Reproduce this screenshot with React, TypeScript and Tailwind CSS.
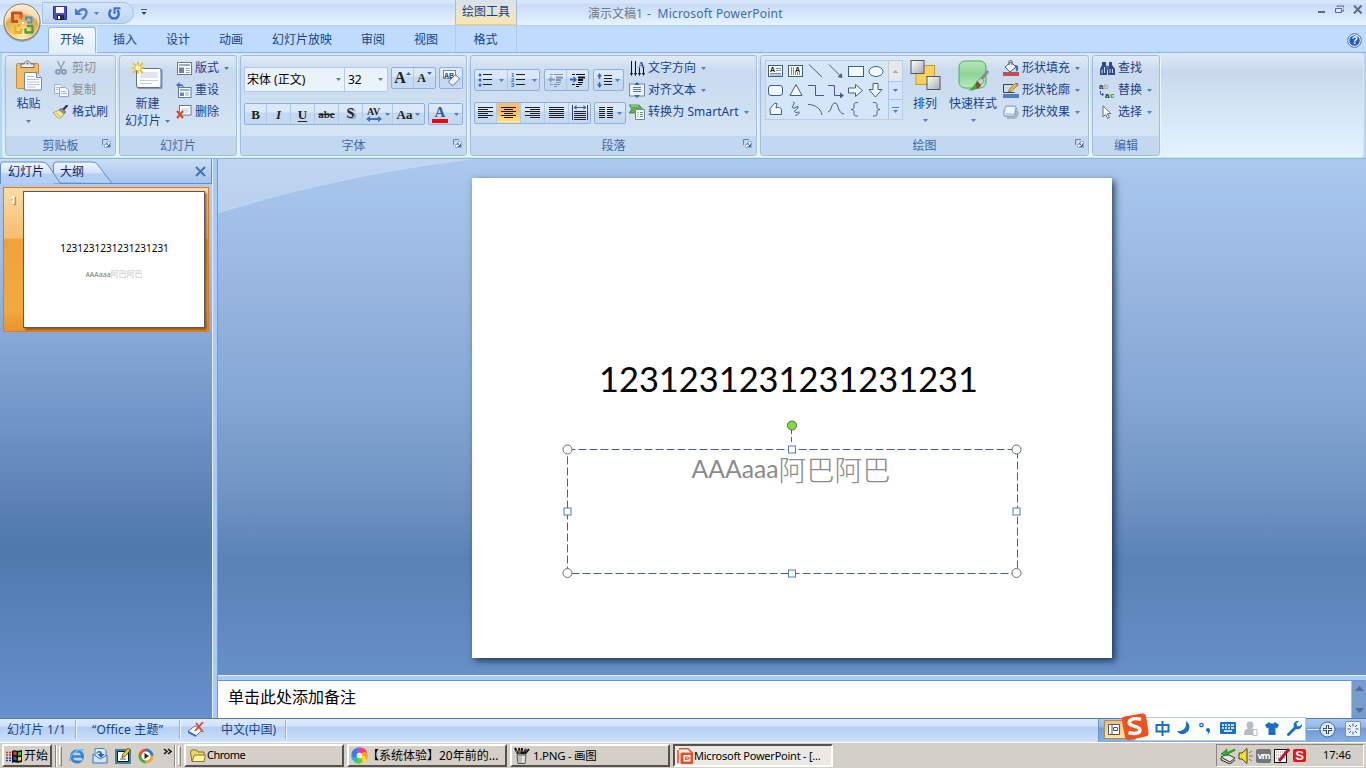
import React from "react";

type Kids = { children?: React.ReactNode };

const Svg = ({ w = 16, h = 16, children, cls = "" }: Kids & { w?: number; h?: number; cls?: string }) => (
  <svg width={w} height={h} viewBox={`0 0 ${w} ${h}`} className={`block shrink-0 ${cls}`} fill="none">
    {children}
  </svg>
);

const Caret = ({ cls = "" }: { cls?: string }) => (
  <Svg w={5} h={3} cls={cls}>
    <path d="M0 0h5L2.500 3z" fill="#4f7fb8" />
  </Svg>
);

const Launcher = () => (
  <Svg w={9} h={9}>
    <path d="M.5 6V.5H6" stroke="#5c86b8" />
    <path d="M2.500 8.500h6v-6h-3v3h-3z" fill="#fff" stroke="#8fb0d8" />
    <path d="M4 4l3.500 3.500M7.500 4.500v3h-3" stroke="#3f6ca8" />
  </Svg>
);

/* ---------- ribbon scaffolding ---------- */

const Group = ({ w, label, launcher, children }: Kids & { w: string; label: string; launcher?: boolean }) => (
  <section className={`${w} flex h-[101px] shrink-0 flex-col overflow-hidden rounded-[3px] border border-[#a3bedd] bg-gradient-to-b from-[#dfeaf6] from-0% via-[#c9daef] via-[16%] to-[#d9e8f7] to-100% shadow-[1px_1px_0_#eef6ff]`}>
    <div className="flex h-[80px]">{children}</div>
    <div className="flex h-[19px] items-center bg-[#c1d8f0] text-[12px] text-[#3e6aaa]">
      <span className="flex-1 text-center leading-[19px]">{label}</span>
      {launcher && <span className="mt-[-5px] mr-[4px] -ml-[13px]"><Launcher /></span>}
    </div>
  </section>
);

const Row = ({ icon, text, caret, off, tw = "" }: { icon: React.ReactNode; text: string; caret?: boolean; off?: boolean; tw?: string }) => (
  <div className={`flex h-[22px] items-center whitespace-nowrap ${off ? "text-[#8d8d8d]" : "text-[#15428b]"}`}>
    <span className="mr-[3px] flex w-[16px] justify-center">{icon}</span>
    <span className={`leading-[22px] ${tw}`}>{text}</span>
    {caret && <Caret cls="ml-[5px]" />}
  </div>
);

const Strip = ({ children, cls = "" }: Kids & { cls?: string }) => (
  <div className={`flex h-[22px] rounded-[2px] border border-[#8fb0dc] bg-gradient-to-b from-[#dbe8f8] from-40% to-[#c5d9f1] to-45% ${cls}`}>{children}</div>
);

const Cell = ({ w, children, on, last }: Kids & { w: string; on?: boolean; last?: boolean }) => (
  <div className={`${w} flex shrink-0 items-center justify-center gap-[3px] ${last ? "" : "border-r border-[#b0c9e8]"} ${on ? "bg-gradient-to-b from-[#fcc07c] from-0% via-[#fdb760] via-40% to-[#ffe78f]" : ""}`}>
    {children}
  </div>
);

/* ---------- icons ---------- */

const Orb = () => (
  <Svg w={42} h={42}>
    <defs>
      <radialGradient id="orb" cx=".5" cy=".85" r=".95">
        <stop offset="0" stopColor="#fff3b8" />
        <stop offset=".35" stopColor="#ecc268" />
        <stop offset=".56" stopColor="#dba650" />
        <stop offset=".64" stopColor="#f3dcae" />
        <stop offset="1" stopColor="#fbf3e4" />
      </radialGradient>
    </defs>
    <circle cx="21" cy="22.500" r="18.500" fill="#6f7f98" opacity=".55" />
    <circle cx="21" cy="21" r="18" fill="url(#orb)" stroke="#8f7752" strokeWidth="1" />
    <circle cx="21" cy="21" r="16.800" stroke="#fff" strokeOpacity=".5" />
    <path d="M17 20.500h-5.500V12h8.500v5" stroke="#cf4a1c" strokeWidth="3" strokeLinejoin="round" />
    <path d="M20 14v4.500" stroke="#ea6c2c" strokeWidth="2.500" />
    <path d="M24.500 16.500h6v5h-4.500M25 15.500v4" stroke="#4a93d8" strokeWidth="2" />
    <path d="M14 24v7.500h6v-4M16 24.500h3.500" stroke="#f6ae22" strokeWidth="2.800" strokeLinejoin="round" />
    <path d="M26 25h5.500v6.500h-7v-4" stroke="#4aa044" strokeWidth="2.400" strokeLinejoin="round" />
    <path d="M21 21h2v2h-2z" fill="#fff" />
  </Svg>
);

const Save = () => (
  <Svg w={14} h={14}>
    <path d="M.5.5h13v13H2L.5 12z" fill="#4950b8" stroke="#2c3180" />
    <path d="M3 1h8v6H3z" fill="#f2f6fd" />
    <path d="M4 9h7v5H4z" fill="#20254f" />
    <path d="M5 10h2v3H5z" fill="#fff" />
  </Svg>
);

const Undo = () => (
  <Svg w={13} h={13}>
    <path d="M0 1v7h7L4.500 5.500z" fill="#4a78d0" />
    <path d="M3 5.500C6 1 11.500 1.500 11.500 5.500c0 3-2 4.500-4.500 6.500" stroke="#5580d2" strokeWidth="2.400" />
  </Svg>
);

const Redo = () => (
  <Svg w={13} h={13}>
    <path d="M3 2.500C-.5 7 2 11.500 6.200 11.500S12 7 9.500 3" stroke="#3e6fcf" strokeWidth="2.400" />
    <path d="M6.500 7V1.200H12.500" stroke="#3e6fcf" strokeWidth="2" />
  </Svg>
);

const Paste = () => (
  <Svg w={28} h={31}>
    <rect x="1.500" y="3.500" width="22" height="25" rx="1.500" fill="#f3bd60" stroke="#c58d3c" />
    <path d="M6 7.500V4h3.500c0-4 6-4 6 0H19v3.500z" fill="#e9edf2" stroke="#6b6f78" />
    <circle cx="12.500" cy="3.500" r="1" fill="#555" />
    <path d="M9.500 12.500h12l5 5v12.500h-17z" fill="#fbfdff" stroke="#6d86ae" />
    <path d="M21.500 12.500v5h5" fill="#dbe6f6" stroke="#6d86ae" />
    <path d="M12 16.500h7M12 19.500h12M12 22h12M12 24.500h12M12 27h9" stroke="#b6c5dc" />
  </Svg>
);

const Cut = () => (
  <Svg w={12} h={14}>
    <path d="M2.500 0l4.500 9M9.500 0L5 9" stroke="#9aa7b8" strokeWidth="1.600" />
    <circle cx="3" cy="10.800" r="2" stroke="#8796ab" strokeWidth="1.700" />
    <circle cx="9" cy="10.800" r="2" stroke="#8796ab" strokeWidth="1.700" />
  </Svg>
);

const Copy = () => (
  <Svg w={15} h={13}>
    <path d="M.5.5h6l2 2v7h-8z" fill="#eef3f9" stroke="#a3b1c4" />
    <path d="M5.500 3.500h6l3 3v6h-9z" fill="#f4f7fb" stroke="#98a8bd" />
    <path d="M2 3.500h3M2 5.500h2M7 7.500h5M7 9.500h6" stroke="#b0bccb" />
  </Svg>
);

const Painter = () => (
  <Svg w={16} h={14}>
    <path d="M14.500 0L10 5" stroke="#3a3558" strokeWidth="2.400" />
    <path d="M8 3l5 4-2 2-5-4z" fill="#8f8aa8" stroke="#5a5870" strokeWidth=".6" />
    <path d="M6 5l5 4-4.500 5L0 8z" fill="#f6e88c" stroke="#a8923c" strokeWidth=".8" />
    <path d="M3 8l5 4" stroke="#c9b050" strokeWidth=".7" />
  </Svg>
);

const NewSlide = () => (
  <Svg w={31} h={28}>
    <rect x="5.500" y="7" width="25" height="20" rx="1.500" fill="#8995a8" />
    <rect x="4.500" y="6.500" width="24.500" height="19" rx="1.500" fill="#fbfcfe" stroke="#59729b" />
    <path d="M8 10h18v6H8z" fill="#dfe6f1" />
    <path d="M8 18.500h18M8 21.500h12" stroke="#c5cfde" />
    <path d="M6 0v12M0 6h12M1 1l10 10M11 1L1 11" stroke="#f2b90c" strokeWidth="1.600" />
    <circle cx="6" cy="6" r="2.500" fill="#fff8ae" />
  </Svg>
);

const LayoutIcon = () => (
  <Svg w={15} h={13}>
    <rect x=".5" y=".5" width="14" height="12" fill="#fff" stroke="#5f7ba5" />
    <path d="M2 2h11v2H2z" fill="#99aed0" />
    <path d="M2 5.500h5V11H2z" fill="#6b84ad" />
    <path d="M8.500 6.500H13M8.500 8.500H13M8.500 10.500H13" stroke="#95a8c6" />
  </Svg>
);

const ResetIcon = () => (
  <Svg w={16} h={16}>
    <rect x="2.500" y="5.500" width="12.500" height="10" fill="#fff" stroke="#5f7ba5" />
    <path d="M4 7h9.500v2H4z" fill="#9db0d0" />
    <path d="M4 10.500h4V14H4z" fill="#6b84ad" />
    <path d="M9 11h4M9 13h4" stroke="#95a8c6" />
    <path d="M3.500 0L0 3l3.500 3V4C6 4 7 4.500 7.500 6 8 3 6 2 3.500 2z" fill="#3b72c8" />
  </Svg>
);

const DeleteIcon = () => (
  <Svg w={16} h={14}>
    <rect x="3.500" y=".5" width="11.500" height="9.500" fill="#fff" stroke="#5f7ba5" />
    <path d="M5 3h8v5H6z" fill="#d9e3f2" />
    <path d="M1 6l6 7M7 6l-6 7" stroke="#df402a" strokeWidth="2" />
  </Svg>
);

const Eraser = () => (
  <Svg w={17} h={16}>
    <rect x=".5" y=".5" width="12" height="8" fill="#f5f8fd" stroke="#7087ae" />
    <text x="1" y="7.500" fontSize="7" fontWeight="bold" fontFamily="Liberation Sans" fill="#28426e">AB</text>
    <path d="M6 11l5-5c1-1 2-1 3 0l1.500 1.500c1 1 .8 2 0 2.700L11 14.500c-1 1-2 1-3 0L6.500 13c-.8-.6-.9-1.400-.5-2z" fill="#e9eef7" stroke="#5b6f95" />
  </Svg>
);

const Lines = ({ rows }: { rows: [number, number][] }) => (
  <Svg w={15} h={12}>
    {rows.map(([a, b], i) => (
      <path key={i} d={`M${a} ${i * 2 + 0.5}H${b}`} stroke="#1d1d1d" />
    ))}
  </Svg>
);

const Bullets = ({ num }: { num?: boolean }) => (
  <Svg w={15} h={14}>
    {[2, 7, 12].map((y, i) => (
      <g key={y}>
        {num ? (
          <text x="0" y={y + 2} fontSize="6" fontWeight="bold" fontFamily="Liberation Sans" fill="#3664b4">{i + 1}</text>
        ) : (
          <circle cx="2" cy={y} r="1.500" fill="#3664b4" />
        )}
        <path d={`M5 ${y - 0.5}h9`} stroke="#222" />
      </g>
    ))}
  </Svg>
);

const Indent = ({ off }: { off?: boolean }) => (
  <Svg w={16} h={14}>
    <g stroke={off ? "#8592ab" : "#111"}>
      <path d="M2 1.500h3M6 1.500h9M2 11.500h3M6 11.500h6M6 13.500h3" />
      <path d="M8 4.500h7M8 7h5" strokeWidth="2" />
      <path d="M8 9.500h5" />
    </g>
    {off ? <path d="M0 6.500L3.500 3v2.500H7v2H3.500V10z" fill="#8c9ab3" /> : <path d="M7 6.500L3.500 3v2.500H0v2h3.500V10z" fill="#3565bd" />}
  </Svg>
);

const Spacing = () => (
  <Svg w={15} h={15}>
    <path d="M2.500 0L5 3.500H3.300V6H1.700V3.500H0zM2.500 15L5 11.500H3.300V9H1.700v2.500H0z" fill="#3565bd" />
    <path d="M7 2.500h8M7 5.500h8M7 8.500h8M7 11.500h8" stroke="#222" />
  </Svg>
);

const Distribute = () => (
  <Svg w={16} h={16}>
    <path d="M.5 0v15M15.500 0v15" stroke="#33456a" />
    <path d="M1.500 2.500L4.500 0v2h7V0l3 2.500-3 2.500V3h-7v2z" fill="#3565bd" />
    <path d="M2 6.500h12M2 8.500h12M2 10.500h12M2 12.500h12M2 14.500h12" stroke="#222" />
  </Svg>
);

const Columns = () => (
  <Svg w={14} h={12}>
    {[0, 2, 4, 6, 8, 10].map((y) => (
      <path key={y} d={`M0 ${y + 0.5}h6M8 ${y + 0.5}h6`} stroke="#1d1d1d" />
    ))}
  </Svg>
);

const TextDir = () => (
  <Svg w={15} h={15}>
    <path d="M1.500 0v13M5.500 0v13M9.500 7v6M13.500 7v6" stroke="#111" />
    <path d="M0 12h3l-1.500 3zM4 12h3l-1.500 3zM8 12h3l-1.500 3zM12 12h3l-1.500 3z" fill="#111" />
    <text x="8" y="7" fontSize="9" fontWeight="bold" fontFamily="Liberation Serif" fill="#26427c">A</text>
  </Svg>
);

const AlignText = () => (
  <Svg w={16} h={16}>
    <rect x=".5" y="2" width="15" height="12" fill="#edf3fb" stroke="#7088b0" />
    <path d="M4 5.500h8M4 7.500h8M4 9.500h8" stroke="#6279a0" />
    <path d="M8 0l3 3H5zM8 16l3-3H5z" fill="#3565bd" />
  </Svg>
);

const SmartArt = () => (
  <Svg w={16} h={16}>
    <path d="M0 1h10l4 4.500L10 9H0l3-4z" fill="#62b04d" stroke="#3a8534" strokeWidth=".8" />
    <path d="M1.500 2h8" stroke="#a5dc8e" />
    <path d="M6.500 5.500h9v10h-9z" fill="#f7fafd" stroke="#6c84aa" />
    <path d="M8.500 8.500h1M11 8.500h3M8.500 10.500h1M11 10.500h3M8.500 12.500h1M11 12.500h3" stroke="#6a8a60" />
  </Svg>
);

const Arrange = () => (
  <Svg w={31} h={31}>
    <defs>
      <linearGradient id="gr" x2="1" y2="1"><stop stopColor="#fff" /><stop offset="1" stopColor="#a4a9b2" /></linearGradient>
    </defs>
    <rect x="6" y="5.500" width="18.500" height="19" fill="#f6d25e" stroke="#c79a2c" />
    <rect x="1" y=".5" width="13" height="13" fill="url(#gr)" stroke="#54585f" />
    <rect x="17" y="16.500" width="13" height="13" fill="url(#gr)" stroke="#54585f" />
  </Svg>
);

const QuickStyle = () => (
  <Svg w={33} h={32}>
    <defs>
      <linearGradient id="qs" x2="0" y2="1"><stop stopColor="#b6e7b9" /><stop offset=".5" stopColor="#8ed695" /><stop offset="1" stopColor="#b7ebb8" /></linearGradient>
    </defs>
    <rect x="2" y="1" width="27" height="27" rx="6" fill="url(#qs)" stroke="#4faa5b" />
    <path d="M31 11l-9 11" stroke="#858c94" strokeWidth="3" />
    <path d="M24 18l3 3-3 4-4-4z" fill="#c9ced6" stroke="#71767e" strokeWidth=".6" />
    <path d="M20 21l4 4c-1 3-3 4-6 4-2 0-1-3 2-8z" fill="#7b5432" />
    <path d="M11 30c4-1 5-4 7-6 2 2 2 4 0 5.500-2 1.500-5 1-7 .5z" fill="#4ba63e" />
  </Svg>
);

const Fill = () => (
  <Svg w={16} h={16}>
    <path d="M2 7l6-5 5 5-6 5z" fill="#eef2f8" stroke="#505c75" />
    <path d="M6 5V1.500C6 0 9 0 9 1.500V5" stroke="#505c75" />
    <path d="M12 5c3 0 4 2 2.500 6-1 1-2 0-1.500-1z" fill="#3768b8" />
    <path d="M0 12h16v4H0z" fill="#c0504d" />
  </Svg>
);

const Outline = () => (
  <Svg w={16} h={15}>
    <path d="M10 1.500H.5V9.500h11" stroke="#3f3f46" />
    <path d="M5.500 9l1-3L13 0l2 2-6.500 6z" fill="#f2ba45" stroke="#7d5a24" strokeWidth=".7" />
    <path d="M13 0l2 2" stroke="#d6504a" strokeWidth="2" />
    <path d="M0 11h16v4H0z" fill="#4f81bd" />
  </Svg>
);

const Effects = () => (
  <Svg w={16} h={14}>
    <path d="M4 3h10l2 6-3 5H4z" fill="#7d8ba3" opacity=".5" />
    <path d="M4 1h7c2 0 2.500 1 2 3l-1 5c-.5 2-1.500 2.500-3 2.500H3C1 11.500 0 10 .5 8.500l1-5C2 2 2.500 1 4 1z" fill="#bcd0ee" stroke="#86a0cc" />
    <path d="M4 2h7c1 0 1 1 .8 2L11 8H2l1-5z" fill="#eef5ff" />
  </Svg>
);

const Binoculars = () => (
  <Svg w={15} h={13}>
    <path d="M3 0h3v3l1 2v8H0V7l2-4V0zM9 0h3v3l3 4v6H8V5l1-2z" fill="#2f4d86" />
    <path d="M6 4h3v4H6z" fill="#4d6ca4" />
    <path d="M2 7.500v4M4.500 5v6M10 7v4M12.500 7v4" stroke="#c9d9f2" />
  </Svg>
);

const Replace = () => (
  <Svg w={16} h={18}>
    <text x="0" y="8" fontSize="8" fontWeight="bold" fontFamily="Liberation Sans" fill="#333">a</text>
    <text x="5" y="8" fontSize="8" fontFamily="Liberation Sans" fill="#999">b</text>
    <text x="6" y="17" fontSize="8" fontWeight="bold" fontFamily="Liberation Sans" fill="#333">a</text>
    <text x="11" y="17" fontSize="8" fontWeight="bold" fontFamily="Liberation Sans" fill="#259b35">c</text>
    <path d="M1.500 10v3.500h3M3 12L4.800 13.500 3 15" stroke="#3565a8" />
  </Svg>
);

const Pointer = () => (
  <Svg w={10} h={14}>
    <path d="M1 .8v11l2.700-2.500 2 4.200 1.700-.8-2-4h3.600z" fill="#fff" stroke="#5d6a82" />
  </Svg>
);

const ink = "#3d6088";
const shapes: React.ReactNode[] = [
  <><rect x=".5" y="2.500" width="14" height="11" fill="#fff" stroke={ink} /><path d="M2 10.500h11M2 12h11M8 5.500h5M8 7.500h5" stroke="#7b8fae" /><text x="2" y="9" fontSize="7" fontWeight="bold" fontFamily="Liberation Sans" fill="#111">A</text></>,
  <><rect x=".5" y="2.500" width="14" height="11" fill="#fff" stroke={ink} /><path d="M3.500 4v8M5.500 4v8M7.500 9v3M9.500 9v3M11.500 9v3" stroke="#7b8fae" /><text x="7" y="9" fontSize="7" fontWeight="bold" fontFamily="Liberation Sans" fill="#111">A</text></>,
  <path d="M1 1.500l13 12.500" stroke={ink} />,
  <><path d="M1 1.500l12 12" stroke={ink} /><path d="M14.500 15l-1-5-4 4z" fill={ink} /></>,
  <rect x=".5" y="3.500" width="15" height="10" fill="#f4f9ff" stroke={ink} />,
  <ellipse cx="8" cy="8.500" rx="7" ry="5" fill="#f4f9ff" stroke={ink} />,
  <rect x=".5" y="3.500" width="14" height="10" rx="2.500" fill="#f4f9ff" stroke={ink} />,
  <path d="M8 2.500l6 11H2z" fill="#f4f9ff" stroke={ink} />,
  <path d="M0 3.500h7.500v10H16" stroke={ink} />,
  <><path d="M0 3.500h6.500v10H13" stroke={ink} /><path d="M16 13.500l-4-3v6z" fill={ink} /></>,
  <path d="M.5 6h7V2.500l7 6-7 6V11h-7z" fill="#f4f9ff" stroke={ink} />,
  <path d="M5 1.500h5v6h4L7.500 15 1 7.500h4z" fill="#f4f9ff" stroke={ink} />,
  <path d="M2 7.500L6.500 2.500H9l-1 4.500c3-1.500 6 0 5.500 3v3.500h-11z" fill="#f4f9ff" stroke={ink} />,
  <path d="M5 1c4 1-3 5 0 6s5-4 5-1-5 3-3 5 5-2 4 1-4 1-3 3" stroke={ink} />,
  <path d="M0 3.500c7 0 13 4 14 10.500" stroke={ink} />,
  <path d="M0 11c4-1 3-9 7-9s2 10 9 11" stroke={ink} />,
  <path d="M10 1.500c-4 0-4 1-4 3.500s0 3-3 3.500c3 .5 3 1 3 3.500s0 3 4 3" stroke={ink} />,
  <path d="M5 1.500c4 0 4 1 4 3.500s0 3 3 3.500c-3 .5-3 1-3 3.500s0 3-4 3" stroke={ink} />,
];

/* ---------- top ---------- */

const TitleBar = () => (
  <header className="flex h-[26px] items-start border-b border-[#b0cff5] bg-gradient-to-b from-[#d6e6fb] from-[12%] via-[#c9dcf5] via-[18%] to-[#e6f3ff]">
    <div className="ml-[42px] mt-[2px] flex h-[22px] w-[92px] items-center rounded-r-[11px] border border-[#a5c2e8] bg-gradient-to-b from-[#d5e5fa] to-[#bdd6f5]">
      <span className="ml-[10px]"><Save /></span>
      <span className="ml-[8px]"><Undo /></span>
      <Caret cls="ml-[6px]" />
      <span className="ml-[9px]"><Redo /></span>
    </div>
    <Svg w={6} h={7} cls="ml-[7px] mt-[9px]">
      <path d="M0 .5h6" stroke="#3c5f8f" /><path d="M.5 3h5L3 6z" fill="#26436f" />
    </Svg>
    <div className="ml-[309px] flex h-[25px] w-[60px] justify-center border-b border-[#f5cd68] bg-gradient-to-b from-[#d7e2ee] to-[#f8e6ae] text-[12px] leading-[23px] text-[#15428b] shadow-[1px_0_0_#a9bdd7,-1px_0_0_#a9bdd7]">绘图工具</div>
    <div className="ml-[72px] whitespace-nowrap text-[12px] leading-[27px]">
      <span className="text-[#6d7987]">演示文稿1</span>
      <span className="ml-[4px] tracking-[.2px] text-[#3e6aaa]">-&nbsp; Microsoft PowerPoint</span>
    </div>
    <div className="ml-auto mr-[3px] mt-[4px] flex items-center gap-[9px]">
      <Svg w={8} h={10}><path d="M0 8h7" stroke="#5b6a80" strokeWidth="2" /></Svg>
      <Svg w={9} h={9}><path d="M2 2V1h7v5H7" stroke="#5b6a80" /><path d="M.5 3.500h6v4h-6z" fill="#dceafb" stroke="#5b6a80" /></Svg>
      <Svg w={10} h={9}><path d="M1 .5l7.500 8M8.500.5L1 8.500" stroke="#5b6a80" strokeWidth="2" /></Svg>
    </div>
  </header>
);

const Tabs = () => (
  <nav className="flex h-[27px] items-end border-b border-[#8db2e3] bg-[#bfdbff] text-[12px] leading-[25px] text-[#15428b]">
    <div className="-mb-px ml-[48px] h-[26px] w-[48px] rounded-t-[3px] border border-b-0 border-[#8fb6e6] bg-gradient-to-b from-[#f5faff] to-[#e2edf9] text-center leading-[24px] shadow-[1px_0_0_#d8f3ff]">开始</div>
    <span className="ml-[17px] w-[25px]">插入</span>
    <span className="ml-[28px] w-[25px]">设计</span>
    <span className="ml-[28px] w-[25px]">动画</span>
    <span className="ml-[28px] w-[62px]">幻灯片放映</span>
    <span className="ml-[27px] w-[25px]">审阅</span>
    <span className="ml-[28px] w-[25px]">视图</span>
    <span className="ml-[16px] h-[26px] w-[62px] border-x border-[#b1cbec] pr-px text-center leading-[27px]">格式</span>
    <span className="mb-[4px] ml-auto mr-[4px]">
      <Svg w={15} h={15}>
        <circle cx="7.500" cy="7.500" r="6.800" fill="#fff" stroke="#3c68ae" />
        <circle cx="7.500" cy="7.500" r="5.300" fill="#2159c7" />
        <text x="4.700" y="11.300" fontSize="10" fontWeight="bold" fontFamily="Liberation Sans" fill="#fff">?</text>
      </Svg>
    </span>
  </nav>
);

const serif = "font-['Liberation_Serif',serif] font-bold text-[#222] leading-none";

const Ribbon = () => (
  <div className="flex h-[106px] gap-[2px] border-b border-[#8fb5cf] bg-[#b9d3f5] px-[2px] text-[12px]">
    <div className="flex w-full gap-[3px] rounded-[3px] border border-t-0 border-[#c4eefa] bg-gradient-to-b from-[#dde8f5] from-0% via-[#c8d9ed] via-[18%] to-[#e3f4ff] to-100% pl-[2px] pt-[2px]">
      <Group w="w-[111px]" label="剪贴板" launcher>
        <div className="flex w-[45px] flex-col items-center pt-[4px] text-[#15428b]">
          <Paste />
          <span className="mt-[4px] leading-[18px]">粘贴</span>
          <Caret cls="mt-[7px]" />
        </div>
        <div className="ml-[2px] mt-[1px]">
          <Row icon={<Cut />} text="剪切" off />
          <Row icon={<Copy />} text="复制" off />
          <Row icon={<Painter />} text="格式刷" />
        </div>
      </Group>

      <Group w="w-[118px]" label="幻灯片">
        <div className="flex w-[55px] flex-col items-center pt-[6px] text-[#15428b]">
          <NewSlide />
          <span className="mt-[5px] leading-[18px]">新建</span>
          <span className="flex items-center gap-[4px] whitespace-nowrap leading-[16px]">幻灯片<Caret /></span>
        </div>
        <div className="ml-[1px] mt-[1px]">
          <Row icon={<LayoutIcon />} text="版式" caret />
          <Row icon={<ResetIcon />} text="重设" />
          <Row icon={<DeleteIcon />} text="删除" />
        </div>
      </Group>

      <Group w="w-[227px]" label="字体" launcher>
        <div className="ml-[3px] w-[219px] pt-[11px]">
          <div className="flex h-[25px]">
            <div className="flex h-[25px] w-[101px] items-center border border-[#b3cae8] bg-[#eaf2fb] pl-[2px] text-black">
              宋体 (正文)<Caret cls="ml-auto mr-[3px]" />
            </div>
            <div className="flex h-[25px] w-[43px] items-center border border-l-0 border-[#b3cae8] bg-[#eaf2fb] pl-[3px] text-black">
              <span>32</span><Caret cls="ml-auto mr-[4px]" />
            </div>
            <Strip cls="ml-[3px] w-[45px]">
              <Cell w="w-[22px]">
                <span className={`${serif} text-[16px]`}>A</span><Svg w={5} h={3} cls="-ml-[3px] -mt-[10px]"><path d="M0 3h5L2.500 0z" fill="#3565bd" /></Svg>
              </Cell>
              <Cell w="w-[21px]" last>
                <span className={`${serif} text-[12px]`}>A</span><Svg w={5} h={3} cls="-ml-[2px] -mt-[10px]"><path d="M0 0h5L2.500 3z" fill="#3565bd" /></Svg>
              </Cell>
            </Strip>
            <Strip cls="ml-[3px] w-[24px]"><Cell w="w-[22px]" last><Eraser /></Cell></Strip>
          </div>
          <div className="mt-[11px] flex gap-[3px]">
            <Strip cls="w-[181px]">
              <Cell w="w-[22px]"><span className={`${serif} text-[13px]`}>B</span></Cell>
              <Cell w="w-[24px]"><span className={`${serif} text-[13px] italic`}>I</span></Cell>
              <Cell w="w-[24px]"><span className={`${serif} text-[13px] underline underline-offset-2`}>U</span></Cell>
              <Cell w="w-[24px]"><span className={`${serif} text-[11px] line-through`}>abc</span></Cell>
              <Cell w="w-[24px]"><span className={`${serif} text-[14px] [text-shadow:2px_1px_1px_#8091ad]`}>S</span></Cell>
              <Cell w="w-[30px]">
                <Svg w={16} h={15}>
                  <text x="1" y="8" fontSize="10" fontFamily="Liberation Serif" fontWeight="bold" fill="#222">AV</text>
                  <path d="M0 12l4-3v2h8V9l4 3-4 3v-2H4v2z" fill="#3b6fc8" />
                </Svg>
                <Caret />
              </Cell>
              <Cell w="w-[31px]" last><span className={`${serif} text-[13px]`}>Aa</span><Caret /></Cell>
            </Strip>
            <Strip cls="w-[35px]">
              <Cell w="w-[33px]" last>
                <div className="flex w-[16px] flex-col items-center">
                  <span className="h-[13px] font-['Liberation_Serif',serif] text-[15px] font-bold leading-[13px] text-[#345a98]">A</span>
                  <span className="h-[4px] w-[16px] bg-[#f00]" />
                </div>
                <Caret cls="ml-[3px]" />
              </Cell>
            </Strip>
          </div>
        </div>
      </Group>

      <Group w="w-[287px]" label="段落" launcher>
        <div className="ml-[3px] w-[152px] pt-[13px]">
          <div className="flex gap-[4px]">
            <Strip cls="w-[66px]">
              <Cell w="w-[33px]"><Bullets /><Caret cls="ml-[3px]" /></Cell>
              <Cell w="w-[31px]" last><Bullets num /><Caret cls="ml-[3px]" /></Cell>
            </Strip>
            <Strip cls="w-[45px]">
              <Cell w="w-[22px]"><Indent off /></Cell>
              <Cell w="w-[21px]" last><Indent /></Cell>
            </Strip>
            <Strip cls="w-[31px]"><Cell w="w-[29px]" last><Spacing /><Caret /></Cell></Strip>
          </div>
          <div className="mt-[11px] flex gap-[3px]">
            <Strip cls="w-[117px]">
              <Cell w="w-[22px]"><Lines rows={[[0, 15], [0, 10], [0, 15], [0, 10], [0, 15], [0, 10]]} /></Cell>
              <Cell w="w-[24px]" on><Lines rows={[[0, 15], [3, 12], [0, 15], [3, 12], [0, 15], [3, 12]]} /></Cell>
              <Cell w="w-[24px]"><Lines rows={[[0, 15], [5, 15], [0, 15], [5, 15], [0, 15], [5, 15]]} /></Cell>
              <Cell w="w-[24px]"><Lines rows={[[0, 15], [0, 15], [0, 15], [0, 15], [0, 15], [0, 15]]} /></Cell>
              <Cell w="w-[21px]" last><Distribute /></Cell>
            </Strip>
            <Strip cls="w-[32px]"><Cell w="w-[30px]" last><Columns /><Caret cls="ml-[1px]" /></Cell></Strip>
          </div>
        </div>
        <div className="ml-[3px] mt-[1px]">
          <Row icon={<TextDir />} text="文字方向" caret />
          <Row icon={<AlignText />} text="对齐文本" caret />
          <Row icon={<SmartArt />} text="转换为 SmartArt" caret tw="tracking-[.07px]" />
        </div>
      </Group>

      <Group w="w-[329px]" label="绘图" launcher>
        <div className="ml-[4px] mt-[4px] flex h-[60px] w-[138px] border border-[#b5cfec] bg-[#d5e6f9]">
          <div className="grid w-[122px] grid-cols-6 grid-rows-3 place-items-center pr-[2px]">
            {shapes.map((s, i) => <Svg key={i} w={16} h={16}>{s}</Svg>)}
          </div>
          <div className="flex w-[14px] flex-col">
            <div className="flex h-[20px] items-center justify-center border-l border-[#c9ccd2] bg-[#e6e8ec]"><Svg w={5} h={3}><path d="M0 3h5L2.500 0z" fill="#a3a7ae" /></Svg></div>
            <div className="flex h-[19px] items-center justify-center border border-r-0 border-[#a9c6ea] bg-[#d3e4fa]"><Caret /></div>
            <div className="flex h-[19px] flex-col items-center justify-center gap-[2px] border-l border-[#a9c6ea] bg-[#d3e4fa]"><span className="h-px w-[7px] bg-[#4f7fb8]" /><Caret /></div>
          </div>
        </div>
        <div className="ml-[4px] flex w-[36px] flex-col items-center pt-[4px] text-[#15428b]">
          <Arrange />
          <span className="mt-[4px] leading-[18px]">排列</span><Caret cls="mt-[6px]" />
        </div>
        <div className="ml-[5px] flex w-[50px] flex-col items-center pt-[4px] text-[#15428b]">
          <QuickStyle />
          <span className="mt-[3px] whitespace-nowrap leading-[18px]">快速样式</span><Caret cls="mt-[6px]" />
        </div>
        <div className="ml-[5px] mt-[1px]">
          <Row icon={<Fill />} text="形状填充" caret />
          <Row icon={<Outline />} text="形状轮廓" caret />
          <Row icon={<Effects />} text="形状效果" caret />
        </div>
      </Group>

      <Group w="w-[68px]" label="编辑">
        <div className="ml-[6px] mt-[1px]">
          <Row icon={<Binoculars />} text="查找" />
          <Row icon={<Replace />} text="替换" caret />
          <Row icon={<Pointer />} text="选择" caret />
        </div>
      </Group>
    </div>
  </div>
);

/* ---------- workspace ---------- */

const SidePanel = () => (
  <aside className="flex w-[212px] shrink-0 flex-col bg-[linear-gradient(#b8cfee_0%,#a3c0e8_15%,#84a6d6_33%,#5b80b5_62%,#4f79ad_70%,#6690cc_100%)]">
    <div className="flex h-[25px] items-start bg-gradient-to-b from-[#cbdff6] to-[#a5c3ec]">
      <svg width="114" height="25" viewBox="0 0 114 25" className="block shrink-0">
        <defs><linearGradient id="tb" x2="0" y2="1"><stop stopColor="#f0f6fe" /><stop offset=".5" stopColor="#d2e3fa" /><stop offset=".55" stopColor="#b2cff5" /><stop offset="1" stopColor="#b4d0f4" /></linearGradient></defs>
        <path d="M53.500 24V6q0-3 3-3H92q4 0 6 3l14 18.500z" fill="url(#tb)" stroke="#5f8fca" />
        <path d="M.5 25V6q0-3 3-3H42q4 0 6 3l12 18" fill="url(#tb)" stroke="#5f8fca" />
        <path d="M60 24.500h54" stroke="#5f8fca" />
        <text x="8" y="17" fontSize="12" fontFamily="'Noto Sans CJK SC',sans-serif" fill="#0b1f6b">幻灯片</text>
        <text x="60" y="17" fontSize="12" fontFamily="'Noto Sans CJK SC',sans-serif" fill="#0b1f6b">大纲</text>
      </svg>
      <div className="flex h-[25px] flex-1 items-center justify-end border-b border-r border-[#5f8fca] pr-[5px]">
        <Svg w={11} h={11}><path d="M1 1l9 9M10 1l-9 9" stroke="#3f74b0" strokeWidth="2" /></Svg>
      </div>
    </div>
    <div className="ml-[3px] mt-[3px] flex h-[145px] w-[206px] border border-[#e8771c] bg-[linear-gradient(#fbdca6_0%,#f6bd6e_35%,#f0a23c_36%,#f2a940_85%,#e8932c_100%)] p-[3px]">
      <span className="w-[16px] pl-[3px] pt-[3px] text-[11px] font-bold leading-[12px] text-white [text-shadow:1px_1px_1px_#8a5a20]">1</span>
      <div className="flex h-[137px] w-[182px] flex-col items-center border border-[#5d5a66] bg-white shadow-[2px_2px_2px_rgba(90,50,0,.6)]">
        <span className="ml-[1px] mt-[49px] text-[10px] leading-[14px] text-black">1231231231231231231</span>
        <span className="mt-[13px] text-[7px] leading-[12px] text-[#777]">AAAaaa<span className="text-[8px] text-[#c4c4c4]">阿巴阿巴</span></span>
      </div>
    </div>
  </aside>
);

const Selection = () => (
  <svg width="464" height="168" viewBox="0 0 464 168" className="absolute left-[88px] top-[238px]" fill="none">
    <rect x="7.500" y="33.500" width="450" height="124" stroke="#44648f" strokeDasharray="8 3" />
    <path d="M231.500 13v16" stroke="#44648f" strokeDasharray="5 3" />
    <circle cx="232" cy="9.500" r="4.500" fill="#83dc38" stroke="#4d6b5c" />
    {[[7.500, 33.500], [456.500, 33.500], [7.500, 157], [456.500, 157]].map(([x, y]) => (
      <circle key={`${x}-${y}`} cx={x} cy={y} r="4.500" fill="#fff" stroke="#666c78" />
    ))}
    {[[232, 33.500], [232, 157.500], [7.500, 95.500], [456.500, 95.500]].map(([x, y]) => (
      <rect key={`${x}-${y}`} x={x - 3.5} y={y - 3.5} width="7" height="7" fill="#fff" stroke="#5580ad" />
    ))}
  </svg>
);

const Editor = () => (
  <main className="flex min-w-0 flex-1 flex-col">
    <div className="relative h-[516px] overflow-hidden bg-[linear-gradient(#abc8ed_0%,#a4c3ea_8%,#9ab8e1_22%,#86a8d5_45%,#7095c4_64%,#5b82b6_78%,#678fc8_100%)] pl-[254px] pt-[19px]">
      <svg width="254" height="60" viewBox="0 0 254 60" className="absolute left-0 top-0">
        <path d="M0 0h254C150 13 70 32 0 54z" fill="#fff" opacity=".25" />
        <path d="M0 54C70 32 150 13 254 0" stroke="#d7e5f7" fill="none" opacity=".4" />
      </svg>
      <section className="relative flex h-[480px] w-[640px] flex-col items-center bg-white shadow-[3px_3px_7px_rgba(10,30,60,.75)]">
        <h1 className="ml-[-7px] mt-[177px] font-['Lato',sans-serif] text-[34.400px] leading-[48px] text-black">1231231231231231231</h1>
        <p className="ml-[-2px] mt-[46px] flex items-center font-['Lato',sans-serif] text-[24.700px] leading-[40px] text-[#8b8b8b]">
          AAAaaa<span className="font-['Noto_Sans_CJK_SC',sans-serif] text-[28px] font-light leading-[38px]">阿巴阿巴</span>
        </p>
        <Selection />
      </section>
    </div>
    <div className="h-[6px] border-b border-t border-b-[#6d95cd] border-t-[#e6f0fc] bg-[#a9cbf8]" />
    <div className="flex h-[37px] bg-white">
      <p className="flex-1 pl-[10px] text-[16px] leading-[33px] text-black">单击此处添加备注</p>
      <div className="flex w-[15px] flex-col items-center justify-between border-l border-[#a9c5ea] bg-[#759bcf] pb-[5px] pt-[5px]">
        <Svg w={9} h={5}><path d="M0 5h9L4.500 0z" fill="#59698f" /></Svg>
        <Svg w={9} h={5}><path d="M0 0h9L4.500 5z" fill="#59698f" /></Svg>
      </div>
    </div>
  </main>
);

/* ---------- status bar ---------- */

const Sep = () => <span className="h-[19px] w-[2px] border-l border-[#8fb3e2] bg-[#eef5ff]" />;

const Ime = () => (
  <div className="absolute left-[1122px] top-[-5px] flex h-[27px] w-[184px] items-end">
    <div className="ml-[13px] flex h-[24px] w-[171px] items-center border border-[#b9c9dc] bg-[#fbfdff] pb-[2px] pl-[19px] text-[#1b70c4]">
      <Svg w={15} h={15}><path d="M1.500 4h12v6.500h-12zM7.500 0v15" stroke="#1b70c4" strokeWidth="2" /></Svg>
      <Svg w={14} h={14} cls="ml-[7px]"><path d="M9 0c7 5 2 14-5 13-2-.3-3-1.500-4-3 6 1 10-3 9-10z" fill="#1b70c4" /></Svg>
      <Svg w={12} h={13} cls="ml-[8px]"><circle cx="2.500" cy="3" r="1.700" stroke="#1b70c4" strokeWidth="1.300" /><path d="M9 6a2 2 0 012 2c0 2-1 4-3 4.500 1-1 1-1.500 1-2.500a2 2 0 010-4z" fill="#1b70c4" /></Svg>
      <Svg w={16} h={12} cls="ml-[9px]"><rect width="16" height="12" rx="1" fill="#1b70c4" /><path d="M2 3h2M5 3h2M8 3h2M11 3h3M2 6h2M5 6h2M8 6h2M11 6h3M4 9h8" stroke="#fff" strokeWidth="1.300" /></Svg>
      <Svg w={14} h={15} cls="ml-[8px]"><circle cx="6" cy="4" r="3.500" fill="#b5bcc8" /><path d="M0 14c0-6 3-7 6-7s5 1 5 7z" fill="#b5bcc8" /><path d="M9 8.500h4v6H9z" fill="#fff" stroke="#b5bcc8" /></Svg>
      <Svg w={14} h={13} cls="ml-[7px]"><path d="M4 0c1 2 5 2 6 0l4 3-2 3.500-1.500-1V13h-7V5.500L2 6.500 0 3z" fill="#1b70c4" /></Svg>
      <Svg w={15} h={15} cls="ml-[8px]"><path d="M1.500 13.500L9 6" stroke="#1b70c4" strokeWidth="3" strokeLinecap="round" /><path d="M12 0L9.500 2.500 10 5l2.500.5L15 3c.5 4-3 6-6 5-3-1-3-5-1-7 1-1 3-1.500 4-1z" fill="#1b70c4" /></Svg>
    </div>
    <Svg w={28} h={28} cls="absolute -left-px -top-px">
      <path d="M4 3.500L20.500.5c3-.5 4 .5 4.500 3l2.500 15c.5 3-.5 4.500-3 5L9 27c-3 .5-4.500-.5-5-3L1 8C.5 5 1 4 4 3.500z" fill="#f0501e" />
      <path d="M20 6.500c-5-1.500-10-1-11.500 2-2 5.500 10.500 4 10.500 8.500 0 4-7 4-11.500 2.500" stroke="#fff" strokeWidth="3.500" />
    </Svg>
  </div>
);

const StatusBar = () => (
  <div className="relative flex h-[24px] items-center border-t border-[#567db0] bg-[linear-gradient(#dce9fa_0%,#d3e3f9_30%,#b3cff5_36%,#c0d8f8_70%,#d5e5fc_100%)] pb-[2px] text-[12px] text-[#15428b]">
    <span className="ml-[7px] w-[68px] whitespace-nowrap tracking-[.25px]">幻灯片 1/1</span>
    <Sep />
    <span className="ml-[15px] w-[87px] whitespace-nowrap tracking-[.2px]">“Office 主题”</span>
    <Sep />
    <span className="ml-[7px]">
      <Svg w={17} h={15}>
        <path d="M0 9l7-5 7 4-6 6z" fill="#fff" stroke="#5c6f94" /><path d="M0 9l8 4v2L0 11z" fill="#3f64b1" />
        <path d="M8 1l7 9M15 0L7 9" stroke="#e2402a" strokeWidth="1.800" />
      </Svg>
    </span>
    <span className="ml-[16px] w-[64px] whitespace-nowrap">中文(中国)</span>
    <Sep />
    <div className="-mb-[2px] ml-auto flex h-[23px] w-[268px] items-center border-l border-[#6d95cc] bg-[linear-gradient(#a9c8f2_0%,#92b7ea_35%,#6f9bd8_40%,#86afe6_100%)] pb-[3px] pl-[5px]">
      <div className="flex h-[19px] w-[22px] items-center justify-start border border-[#b58a4e] bg-gradient-to-b from-[#e9bd86] to-[#ffe593] pl-[3px]">
        <Svg w={12} h={11}><path d="M.5.5h11v10H.5z" fill="#fff" stroke="#4c566b" /><path d="M4 1v9M5.500 3.500h4v3h-4z" stroke="#4c566b" /></Svg>
      </div>
      <span className="ml-[181px] h-px w-[12px] bg-[#e2eefe]" />
      <Svg w={17} h={17}>
        <circle cx="8.500" cy="8.500" r="7.500" fill="#dce9fb" stroke="#47658f" /><path d="M4 8.500h9M8.500 4v9" stroke="#33496f" strokeWidth="3" /><path d="M4.500 8.500h8M8.500 4.500v8" stroke="#fff" strokeWidth="1" />
      </Svg>
      <Svg w={16} h={16} cls="ml-[9px]">
        <rect x=".5" y=".5" width="15" height="15" rx="1.500" fill="#e9f1fc" stroke="#7c90b3" />
        <path d="M8 2.500v3M8 10.500v3M2.500 8h3M10.500 8h3M4 4l2 2M12 4l-2 2M4 12l2-2M12 12l-2-2" stroke="#44597f" />
      </Svg>
    </div>
    <Ime />
  </div>
);

/* ---------- taskbar ---------- */

const raised = "border-2 border-l-white border-t-white border-b-[#55524d] border-r-[#55524d] bg-[#d4d0c8]";
const Grip = () => <span className="block h-[20px] w-[3px] border border-l-white border-t-white border-b-[#8a867e] border-r-[#8a867e]" />;

const Task = ({ w, icon, text, tx = "" }: { w: string; icon: React.ReactNode; text: string; tx?: string }) => (
  <div className={`${w} ${raised} flex h-[23px] items-center gap-[2px] whitespace-nowrap pl-[2px]`}>
    {icon}<span className={tx}>{text}</span>
  </div>
);

const Taskbar = () => (
  <footer className="flex h-[26px] items-center border-t border-white bg-[#d4d0c8] text-[12px] text-black">
    <div className={`${raised} ml-[2px] flex h-[23px] w-[50px] items-center whitespace-nowrap pl-[2px]`}>
      <Svg w={17} h={14}>
        <path d="M6 2c3-2 4 1 10-1v12c-6 2-7-1-10 1z" fill="#111" />
        <path d="M7.500 3c1-.8 2-.4 3 0v3.500c-1-.4-2-.8-3 0z" fill="#f33b1c" /><path d="M12 3.200c1 .2 2 0 3-.4v3.500c-1 .5-2 .5-3 .2z" fill="#38c03a" />
        <path d="M7.500 8c1-.8 2-.4 3 0v3.500c-1-.4-2-.8-3 0z" fill="#3157e8" /><path d="M12 8.200c1 .2 2 0 3-.4v3.500c-1 .5-2 .5-3 .2z" fill="#f6e12c" />
        <path d="M0 3.500h2M3 3.500h2M0 6h2M3 6h2" stroke="#d2332a" strokeWidth="1.500" /><path d="M0 9h2M3 9h2M0 11.500h2M3 11.500h2" stroke="#2a3fb0" strokeWidth="1.500" />
      </Svg>
      <span className="ml-px">开始</span>
    </div>
    <span className="ml-[3px] h-[22px] w-[2px] border-l border-[#8a867e] bg-white" />
    <span className="ml-[2px]"><Grip /></span>
    <Svg w={16} h={16} cls="ml-[7px]">
      <circle cx="8" cy="8.500" r="5.500" stroke="#2b86dd" strokeWidth="3" /><path d="M3 8.500h11" stroke="#2b86dd" strokeWidth="2.500" /><path d="M13.500 10H9v2.500h4z" fill="#d4d0c8" />
      <path d="M1 13C-1 8 9 0 15 2" stroke="#6cbdf2" strokeWidth="1.500" />
    </Svg>
    <Svg w={16} h={16} cls="ml-[7px]">
      <path d="M3 .5h9l2 2V12H3z" fill="#d9ebff" stroke="#4c82c6" /><path d="M1 6l7 5 7-4v8H1z" fill="#cfe3fb" stroke="#3d74bd" /><path d="M4 7c0-5 6-5 6-1h2.500L9 10 5.500 6H8c0-2-3-2-4 1z" fill="#2766b8" />
    </Svg>
    <Svg w={16} h={16} cls="ml-[7px]">
      <path d="M0 1h16v15H0z" fill="#3d82a5" /><path d="M2.500 3.500h11v10h-11z" fill="#fdfdf3" stroke="#111" /><path d="M5 11h6" stroke="#555" /><path d="M7 9.500l.5-3L13 0l2.500 2L10 8.500z" fill="#f4c52a" stroke="#4c3a0d" strokeWidth=".8" />
    </Svg>
    <Svg w={16} h={16} cls="ml-[7px]">
      <path d="M8 8V1a7 7 0 00-7 7z" fill="#ea5426" stroke="#ea5426" /><path d="M8 8h7a7 7 0 00-7-7z" fill="#3a70d0" stroke="#3a70d0" /><path d="M8 8H1a7 7 0 007 7z" fill="#4ca53b" stroke="#4ca53b" /><path d="M8 8v7a7 7 0 007-7z" fill="#f1a620" stroke="#f1a620" />
      <circle cx="8" cy="8" r="4.500" fill="#fff" /><path d="M6.500 5l4.500 3-4.500 3z" fill="#222" />
    </Svg>
    <Svg w={9} h={8} cls="mb-[8px] ml-[9px]"><path d="M1 1l3 2.500L1 6M5 1l3 2.500L5 6" stroke="#111" strokeWidth="1.500" /></Svg>
    <span className="ml-[2px] h-[22px] w-[2px] border-l border-[#8a867e] bg-white" />
    <span className="ml-[2px]"><Grip /></span>
    <div className="ml-[3px] flex gap-[3px]">
      <Task w="w-[160px]" text="Chrome" tx="text-[11px] tracking-[-.5px]" icon={<Svg w={16} h={14} cls="ml-[2px] -mr-px"><path d="M.5 3l1-2h5l1.500 2h6v9.500H2z" fill="#f3d667" stroke="#8c7622" /><path d="M2 12.500L4.500 6h11l-1.500 6.500z" fill="#fff3a5" stroke="#8c7622" /></Svg>} />
      <Task w="w-[160px]" text="【系统体验】20年前的..." tx="-ml-[3px]" icon={<Svg w={17} h={17}>
        {["#b455d8", "#f0417b", "#f9a11b", "#f7dc25", "#5fcb3e", "#28b6d9", "#4277ee"].map((c, i) => (
          <path key={c} d="M8.500 6C6 4 7 .5 11 .7c4 1 5 4 4.500 6.500z" fill={c} transform={`rotate(${i * 51 - 40} 8.500 8.500)`} />
        ))}
        <circle cx="8.500" cy="8.500" r="2.800" fill="#f4f1ea" />
      </Svg>} />
      <Task w="w-[160px]" text="1.PNG - 画图" tx="text-[11.500px] tracking-[-.3px]" icon={<Svg w={17} h={17}><path d="M3 8h9l-1 8.500H4z" fill="#e3e3e3" stroke="#555" /><path d="M5 8v8M7 8v8" stroke="#999" /><path d="M4 7L1 1M6 7L5 1M8 7V1M9 7l3-5M11 7l4-5" stroke="#111" strokeWidth="2" /><path d="M5.500 7V3M7 4h2" stroke="#d22" strokeWidth="1.500" /><path d="M10 5l2-3" stroke="#24b" strokeWidth="1.500" /><path d="M2 3l1 3" stroke="#2a9b38" /></Svg>} />
      <div className="flex h-[23px] w-[160px] items-center gap-px whitespace-nowrap border-2 border-b-white border-l-[#55524d] border-r-white border-t-[#55524d] bg-[#ece9e4] pl-[2px] pt-px">
        <Svg w={16} h={16}><path d="M2 .8h9l4 4v4" fill="#fff" stroke="#e2522a" strokeWidth="1.600" /><path d="M1 15V2" stroke="#e2522a" strokeWidth="1.600" /><rect x="3.500" y="4.500" width="12.500" height="11.500" rx="1.500" fill="#e2522a" /><path d="M6.500 7h7v6.500h-7z" fill="#fff" /><path d="M8.500 12V9h2.500a1 1 0 010 2.200H9" stroke="#e2522a" strokeWidth="1.200" /></Svg>
        <span className="text-[11px] tracking-[-.23px]">Microsoft PowerPoint - [...</span>
      </div>
    </div>
    <div className="ml-auto mr-[2px] flex h-[23px] w-[148px] items-center border border-b-white border-l-[#8a867e] border-r-white border-t-[#8a867e] pl-[3px]">
      <Svg w={16} h={16}><path d="M1 9l6-3 8 4-5 4z" fill="#e8e8e8" stroke="#333" /><path d="M1 10v2l9 4 5-4" stroke="#333" /><path d="M15 1L7 4.500V1L1 6l7 2-1-1.500 8-4z" fill="#2ab52c" stroke="#117a18" strokeWidth=".6" /></Svg>
      <Svg w={16} h={16} cls="ml-[2px]"><path d="M1 5h3l5-4.500v15L4 11H1z" fill="#f2de3a" stroke="#4b4210" /><path d="M11 5l3-2M11 8h4M11 11l3 2" stroke="#777" /></Svg>
      <div className="ml-[2px] flex h-[14px] w-[15px] items-center justify-center rounded-[2px] bg-[#747678] text-[9px] font-bold leading-none tracking-[-1px] text-white">vm</div>
      <Svg w={16} h={16} cls="ml-[3px]"><rect x=".5" y="1.500" width="12" height="13" fill="#fff" stroke="#111" /><path d="M2 4h9M2 7h9M2 10h9" stroke="#777" strokeDasharray="1 1" /><path d="M5 13L15 1" stroke="#b81830" strokeWidth="3" /></Svg>
      <div className="ml-[3px] flex h-[13px] w-[13px] items-center justify-center rounded-[2px] bg-[#f00f17] font-['Liberation_Sans'] text-[13px] font-bold leading-none text-white">S</div>
      <span className="ml-auto mr-[12px] text-[11px]">17:46</span>
    </div>
  </footer>
);

export default function App() {
  return (
    <div className="relative flex h-[768px] w-[1366px] flex-col overflow-hidden bg-[#bfdbff] font-['Noto_Sans','Noto_Sans_CJK_SC',sans-serif]">
      <TitleBar />
      <Tabs />
      <Ribbon />
      <div className="flex h-[559px] shrink-0">
        <SidePanel />
        <div className="w-[6px] shrink-0 border-l border-r border-l-[#e4effc] border-r-[#6d9ad6] bg-[#a9cbf8]" />
        <Editor />
      </div>
      <StatusBar />
      <Taskbar />
      <div className="absolute left-[1px] top-[1px]"><Orb /></div>
    </div>
  );
}
